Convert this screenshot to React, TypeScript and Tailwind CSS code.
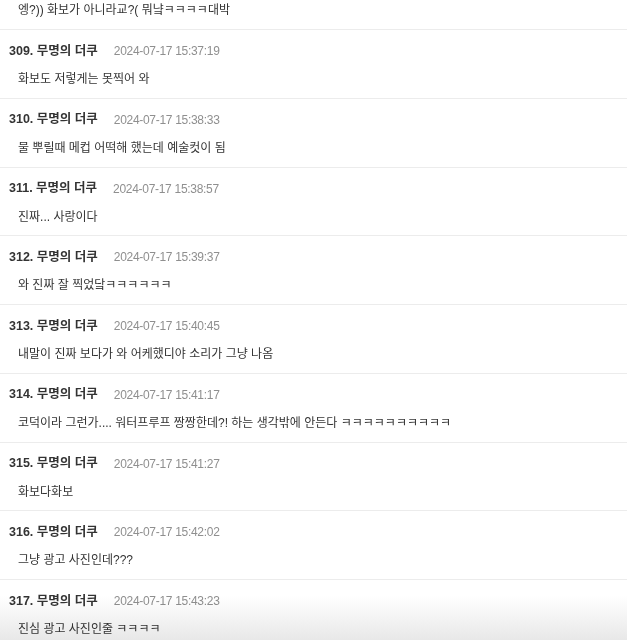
import React from 'react';

type Comment = {
  no: number;
  date: string;
  text: string;
};

const comments: Comment[] = [
  { no: 309, date: '2024-07-17 15:37:19', text: '화보도 저렇게는 못찍어 와' },
  { no: 310, date: '2024-07-17 15:38:33', text: '물 뿌릴때 메컵 어떡해 했는데 예술컷이 됨' },
  { no: 311, date: '2024-07-17 15:38:57', text: '진짜... 사랑이다' },
  { no: 312, date: '2024-07-17 15:39:37', text: '와 진짜 잘 찍었닼ㅋㅋㅋㅋㅋㅋ' },
  { no: 313, date: '2024-07-17 15:40:45', text: '내말이 진짜 보다가 와 어케했디야 소리가 그냥 나옴' },
  { no: 314, date: '2024-07-17 15:41:17', text: '코덕이라 그런가.... 워터프루프 짱짱한데?! 하는 생각밖에 안든다 ㅋㅋㅋㅋㅋㅋㅋㅋㅋㅋ' },
  { no: 315, date: '2024-07-17 15:41:27', text: '화보다화보' },
  { no: 316, date: '2024-07-17 15:42:02', text: '그냥 광고 사진인데???' },
  { no: 317, date: '2024-07-17 15:43:23', text: '진심 광고 사진인줄 ㅋㅋㅋㅋ' },
];

const font = { fontFamily: '"Liberation Sans", "Noto Sans CJK KR", sans-serif' };

const CommentRow: React.FC<{ c: Comment }> = ({ c }) => (
  <div className="h-[68.75px] border-b border-[#ececec] pt-[11px]">
    <div className="flex h-5 items-center pl-[9px]">
      <span className="text-[12.5px] font-bold text-[#333]">{c.no}. 무명의 더쿠</span>
      <span className="ml-4 text-[12px] tracking-[-0.3px] text-[#8f8f8f]">{c.date}</span>
    </div>
    <div className="mt-[8px] flex h-5 items-center pl-[18px] text-[12px] text-[#333]">{c.text}</div>
  </div>
);

const App: React.FC = () => {
  return (
    <div className="relative h-[640px] w-[627px] overflow-hidden bg-white" style={font}>
      <div className="flex h-[30px] items-start border-b border-[#ececec] pl-[18px] pt-[1px] text-[12px] text-[#333]">
        엥?)) 화보가 아니라교?( 뭐냨ㅋㅋㅋㅋ대박
      </div>
      {comments.map((c) => (
        <CommentRow key={c.no} c={c} />
      ))}
      <div className="pointer-events-none absolute bottom-0 left-0 h-[44px] w-full bg-gradient-to-b from-white to-[#e8e8e8] mix-blend-multiply" />
    </div>
  );
};

export default App;
